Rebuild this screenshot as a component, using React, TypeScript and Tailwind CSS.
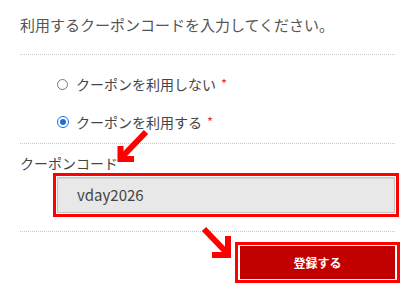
import React from "react";

export default function App() {
  const font = { fontFamily: '"Noto Sans CJK JP", "Noto Sans", sans-serif' };
  return (
    <div className="relative w-[415px] h-[295px] bg-white overflow-hidden" style={font}>
      <div className="flex flex-col px-[20px] pt-[15px]">
        <div className="text-[15px] leading-[20px] text-[#555]">利用するクーポンコードを入力してください。</div>
        <div className="mt-[19px] border-t border-dotted border-[#c8c8c8]" />
        <div className="mt-[19px] flex items-center h-[20px] pl-[37px] text-[14px] text-[#444]">
          <span className="w-[11px] h-[11px] rounded-full border border-[#777] bg-white" />
          <span className="ml-[8px]">クーポンを利用しない</span>
          <span className="ml-[5px] text-[13px] leading-[14px] text-[#e5343f]">*</span>
        </div>
        <div className="mt-[18px] flex items-center h-[20px] pl-[37px] text-[14px] text-[#444]">
          <span className="w-[12px] h-[12px] rounded-full border-[1.5px] border-[#1a6fd6] bg-white flex items-center justify-center">
            <span className="w-[6px] h-[6px] rounded-full bg-[#1a6fd6]" />
          </span>
          <span className="ml-[7px]">クーポンを利用する</span>
          <span className="ml-[5px] text-[13px] leading-[14px] text-[#e5343f]">*</span>
        </div>
        <div className="mt-[11px] border-t border-dotted border-[#c8c8c8]" />
        <div className="mt-[9px] text-[14px] leading-[20px] text-[#444]">クーポンコード</div>
        <div className="ml-[33px] -mr-[4px] border-[3px] border-[#ff0000] p-[1px] bg-white">
          <div className="h-[36px] border border-[#c4c4c4] bg-[#e8e8e8] flex items-center pl-[19px] text-[15px] text-[#444] shadow-[inset_0_1px_1px_rgba(0,0,0,0.08)]">
            vday2026
          </div>
        </div>
        <div className="mt-[14px] border-t border-dotted border-[#c8c8c8]" />
        <div className="mt-[10px] self-end -mr-[5px] w-[165px] h-[41px] border-[3px] border-[#ff0000] px-[2px] py-[1px] bg-white">
          <div className="w-full h-full bg-[#c30000] flex items-center justify-center text-white text-[12px] font-bold">
            登録する
          </div>
        </div>
      </div>
      <svg className="absolute inset-0 pointer-events-none" width="415" height="295" viewBox="0 0 415 295">
        <g stroke="#ff0000" strokeWidth="6" fill="none" strokeLinejoin="miter">
          <line x1="146" y1="132" x2="122" y2="157" />
          <polyline points="120.5,146 120.5,159 134,159" />
          <line x1="204" y1="229" x2="226" y2="252" />
          <polyline points="228,236 228,255 212,255" />
        </g>
      </svg>
    </div>
  );
}
